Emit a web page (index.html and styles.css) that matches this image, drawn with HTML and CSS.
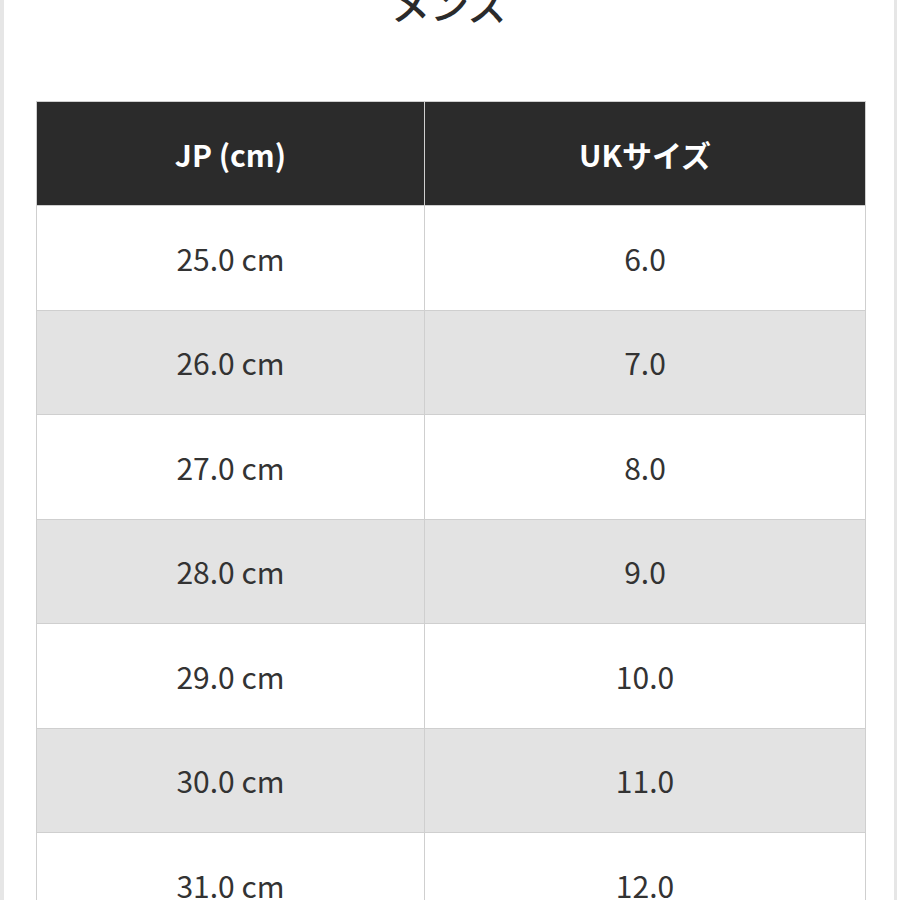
FILE: index.html
```html
<!DOCTYPE html>
<html lang="ja">
<head>
<meta charset="utf-8">
<link rel="stylesheet" href="styles.css">
</head>
<body>
<div class="page">
  <h2 class="title">メンズ</h2>
  <table class="size-table">
    <thead>
      <tr><th class="col-jp">JP (cm)</th><th class="col-uk">UKサイズ</th></tr>
    </thead>
    <tbody>
      <tr><td>25.0 cm</td><td>6.0</td></tr>
      <tr class="alt"><td>26.0 cm</td><td>7.0</td></tr>
      <tr><td>27.0 cm</td><td>8.0</td></tr>
      <tr class="alt"><td>28.0 cm</td><td>9.0</td></tr>
      <tr><td>29.0 cm</td><td>10.0</td></tr>
      <tr class="alt"><td>30.0 cm</td><td>11.0</td></tr>
      <tr><td>31.0 cm</td><td>12.0</td></tr>
    </tbody>
  </table>
</div>
</body>
</html>
```
FILE: styles.css
```css
html, body {
  margin: 0;
  padding: 0;
  background: #ffffff;
  overflow: hidden;
}
body {
  font-family: "Noto Sans CJK JP", "Noto Sans", sans-serif;
  color: #333333;
}
.page {
  width: 890px;
  height: 900px;
  border-left: 4px solid #e6e6e6;
  border-right: 3px solid #e6e6e6;
  background: #ffffff;
  overflow: hidden;
}
.title {
  margin: -16px 0 0 0;
  height: 39px;
  font-size: 39px;
  line-height: 39px;
  font-weight: 500;
  text-align: center;
  color: #2b2b2b;
}
.size-table {
  margin: 78px 0 0 32px;
  width: 828px;
  border-collapse: collapse;
  table-layout: fixed;
}
.size-table th,
.size-table td {
  border: 1px solid #cfcfcf;
  text-align: center;
  vertical-align: middle;
  padding: 0;
}
.size-table th {
  background: #2b2b2b;
  color: #ffffff;
  font-weight: 700;
  font-size: 30px;
  height: 103px;
}
.col-jp { width: 387px; }
.col-uk { width: 440px; }
.size-table td {
  height: 103.5px;
  font-size: 30px;
  font-weight: 400;
  color: #333333;
  background: #ffffff;
}
.size-table tr.alt td {
  background: #e3e3e3;
}
```
